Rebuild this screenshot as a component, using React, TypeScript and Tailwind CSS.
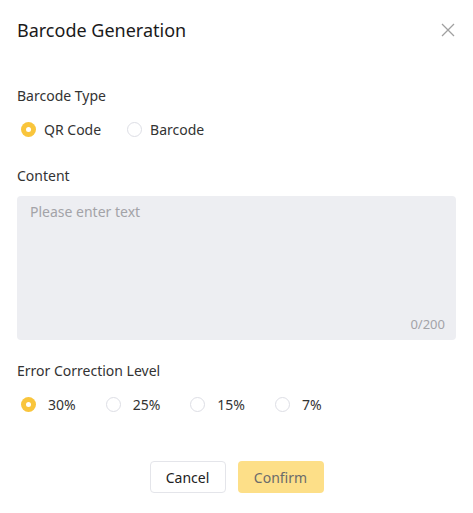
import { useState } from 'react';

const font = { fontFamily: '"Noto Sans", "Open Sans", sans-serif' };

function Radio({ checked, label, onClick, gap }: { checked: boolean; label: string; onClick: () => void; gap: string }) {
  return (
    <button type="button" onClick={onClick} className={`flex items-center ${gap} text-[14px] text-[#333]`}>
      {checked ? (
        <span className="flex h-[15px] w-[15px] items-center justify-center rounded-full bg-[#f9c53c]">
          <span className="h-[5px] w-[5px] rounded-full bg-white"></span>
        </span>
      ) : (
        <span className="h-[15px] w-[15px] rounded-full border-[1.5px] border-[#dddee5] bg-white"></span>
      )}
      <span>{label}</span>
    </button>
  );
}

export default function App() {
  const [type, setType] = useState('qr');
  const [level, setLevel] = useState('30%');
  const [text, setText] = useState('');

  return (
    <div className="h-[513px] w-[473px] bg-white px-[17px] pt-[17px]" style={font}>
      <div className="flex items-center justify-between">
        <h1 className="text-[18px] leading-[26px] text-[#1a1a1a]">Barcode Generation</h1>
        <button type="button" className="mr-[1px] text-[#a0a0a0]">
          <svg width="14" height="14" viewBox="0 0 14 14" fill="none" stroke="currentColor" strokeWidth="1.3">
            <path d="M1 1L13 13M13 1L1 13" />
          </svg>
        </button>
      </div>

      <div className="mt-[43px] text-[14px] leading-[20px] text-[#333]">Barcode Type</div>
      <div className="mt-[13px] flex items-center gap-[26px] pl-[4px]">
        <Radio checked={type === 'qr'} label="QR Code" onClick={() => setType('qr')} gap="gap-[8px]" />
        <Radio checked={type === 'bar'} label="Barcode" onClick={() => setType('bar')} gap="gap-[8px]" />
      </div>

      <div className="mt-[26px] text-[14px] leading-[20px] text-[#333]">Content</div>
      <div className="relative mt-[10px] h-[144px] rounded-[4px] bg-[#edeef2]">
        <textarea
          value={text}
          maxLength={200}
          onChange={(e) => setText(e.target.value)}
          placeholder="Please enter text"
          className="h-full w-full resize-none bg-transparent px-[13px] py-[6px] text-[14px] leading-[20px] text-[#333] outline-none placeholder:text-[#a3a3a8]"
        />
        <span className="absolute bottom-[6px] right-[11px] text-[13px] text-[#a3a3a8]">{text.length}/200</span>
      </div>

      <div className="mt-[21px] text-[14px] leading-[20px] text-[#333]">Error Correction Level</div>
      <div className="mt-[13px] flex items-center gap-[30px] pl-[4px]">
        {['30%', '25%', '15%', '7%'].map((l) => (
          <Radio key={l} checked={level === l} label={l} onClick={() => setLevel(l)} gap="gap-[12px]" />
        ))}
      </div>

      <div className="mt-[46px] flex justify-center gap-[12px]">
        <button type="button" className="h-[32px] w-[76px] rounded-[4px] border border-[#e4e5ea] bg-white text-[14px] text-[#222]">
          Cancel
        </button>
        <button type="button" className="h-[32px] w-[86px] rounded-[4px] bg-[#fddf88] text-[14px] text-[#6b6b6b]">
          Confirm
        </button>
      </div>
    </div>
  );
}
